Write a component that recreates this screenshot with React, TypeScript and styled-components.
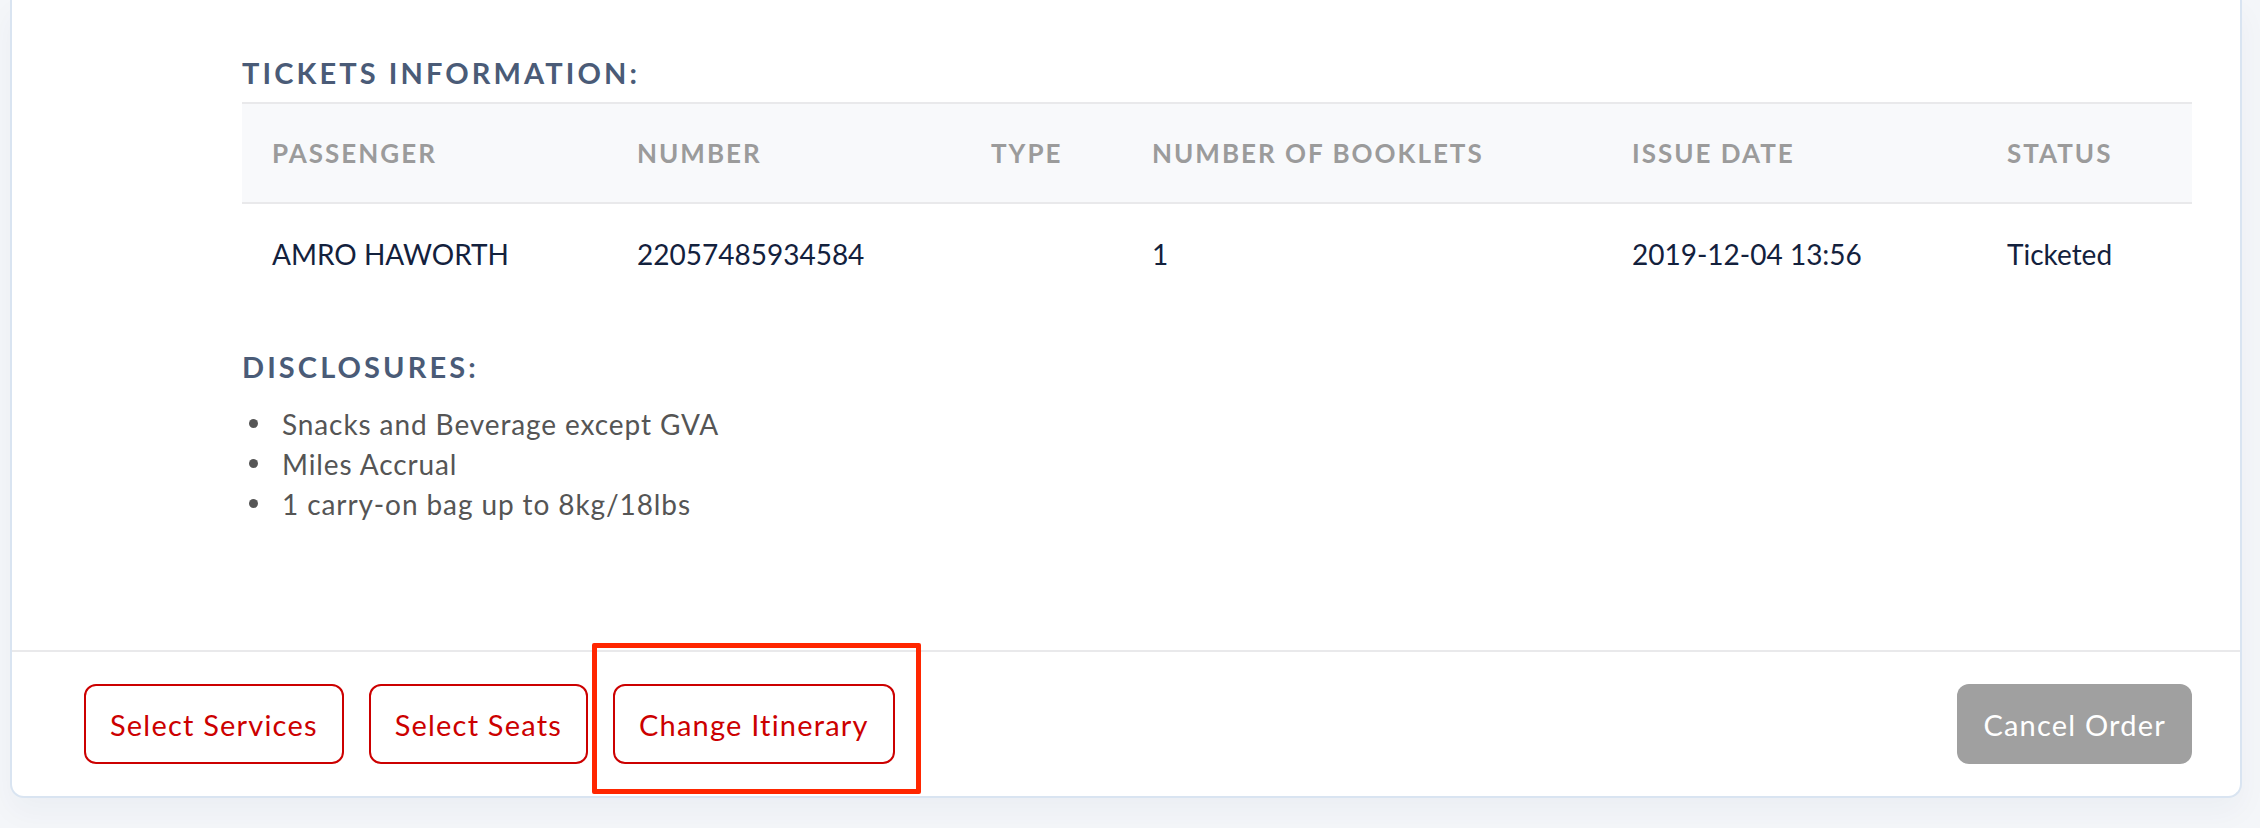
import React from "react";
import styled, { createGlobalStyle } from "styled-components";

const GlobalStyle = createGlobalStyle`
  html, body { margin: 0; padding: 0; background: #f4f6f9; }
  body { font-family: Lato, "Liberation Sans", sans-serif; -webkit-font-smoothing: antialiased; }
  *, *::before, *::after { box-sizing: border-box; }
`;

const COLUMNS = "365px 354px 161px 480px 375px 1fr";

const Page = styled.div`
  width: 2260px;
  height: 828px;
  overflow: hidden;
  padding: 0 18px 0 10px;
  background: #f4f6f9;
`;

const Card = styled.section`
  background: #ffffff;
  border: 2px solid #d9e4f1;
  border-top: none;
  border-radius: 0 0 14px 14px;
  box-shadow: 0 14px 30px rgba(30, 50, 90, 0.04);
`;

const Body = styled.div`
  padding: 53px 48px 126px 230px;
`;

const SectionTitle = styled.h3<{ $mt?: number; $mb?: number }>`
  margin: ${(p) => p.$mt ?? 0}px 0 ${(p) => p.$mb ?? 0}px;
  font-family: Lato, "Liberation Sans", sans-serif;
  font-weight: 700;
  font-size: 29px;
  line-height: 40px;
  letter-spacing: 3.1px;
  color: #4a5b77;
  text-transform: uppercase;
`;

const HeadRow = styled.div`
  display: grid;
  grid-template-columns: ${COLUMNS};
  align-items: center;
  height: 102px;
  background: #f8f9fb;
  border-top: 2px solid #e9e9eb;
  border-bottom: 2px solid #e9e9eb;
`;

const HeadCell = styled.div`
  padding-left: 30px;
  font-weight: 700;
  font-size: 26px;
  line-height: 40px;
  letter-spacing: 2px;
  color: #9b9b9b;
  text-transform: uppercase;
  white-space: nowrap;
`;

const Row = styled.div`
  display: grid;
  grid-template-columns: ${COLUMNS};
  align-items: center;
  height: 100px;
`;

const Cell = styled.div`
  padding-left: 30px;
  font-size: 28px;
  line-height: 40px;
  color: #13213d;
  white-space: nowrap;
`;

const List = styled.ul`
  list-style: none;
  margin: 0;
  padding: 0;
`;

const Item = styled.li`
  position: relative;
  padding-left: 40px;
  font-size: 28px;
  line-height: 40px;
  letter-spacing: 0.9px;
  color: #555555;

  &::before {
    content: "";
    position: absolute;
    left: 7px;
    top: 15px;
    width: 9px;
    height: 9px;
    border-radius: 50%;
    background: #555555;
  }
`;

const Footer = styled.div`
  display: flex;
  align-items: center;
  gap: 25px;
  padding: 32px 48px 32px 72px;
  border-top: 2px solid #e9e9eb;
`;

const OutlineButton = styled.button`
  height: 80px;
  padding: 0 24px;
  border: 2px solid #cc0000;
  border-radius: 12px;
  background: #ffffff;
  color: #cc0000;
  font-family: Lato, "Liberation Sans", sans-serif;
  font-size: 29px;
  letter-spacing: 1.2px;
  white-space: nowrap;
  cursor: pointer;
`;

const CancelButton = styled.button`
  margin-left: auto;
  height: 80px;
  padding: 0 26px;
  border: none;
  border-radius: 12px;
  background: #a0a0a0;
  color: #ffffff;
  font-family: Lato, "Liberation Sans", sans-serif;
  font-size: 29px;
  letter-spacing: 1.2px;
  white-space: nowrap;
  cursor: pointer;
`;

const Highlight = styled.span`
  position: relative;
  display: inline-flex;
`;

const Marker = styled.span`
  position: absolute;
  top: -41px;
  left: -21px;
  right: -26px;
  bottom: -30px;
  border: 5px solid #ff2600;
  border-radius: 2px;
  pointer-events: none;
`;

const headers = ["Passenger", "Number", "Type", "Number of Booklets", "Issue Date", "Status"];
const ticket = ["AMRO HAWORTH", "22057485934584", "", "1", "2019-12-04 13:56", "Ticketed"];
const disclosures = [
  "Snacks and Beverage except GVA",
  "Miles Accrual",
  "1 carry-on bag up to 8kg/18lbs",
];

export default function App() {
  return (
    <>
      <GlobalStyle />
      <Page>
        <Card>
          <Body>
            <SectionTitle $mb={9}>Tickets Information:</SectionTitle>
            <HeadRow>
              {headers.map((h) => (
                <HeadCell key={h}>{h}</HeadCell>
              ))}
            </HeadRow>
            <Row>
              {ticket.map((v, i) => (
                <Cell key={i}>{v}</Cell>
              ))}
            </Row>
            <SectionTitle $mt={43} $mb={17}>Disclosures:</SectionTitle>
            <List>
              {disclosures.map((d) => (
                <Item key={d}>{d}</Item>
              ))}
            </List>
          </Body>
          <Footer>
            <OutlineButton>Select Services</OutlineButton>
            <OutlineButton>Select Seats</OutlineButton>
            <Highlight>
              <OutlineButton>Change Itinerary</OutlineButton>
              <Marker />
            </Highlight>
            <CancelButton>Cancel Order</CancelButton>
          </Footer>
        </Card>
      </Page>
    </>
  );
}
